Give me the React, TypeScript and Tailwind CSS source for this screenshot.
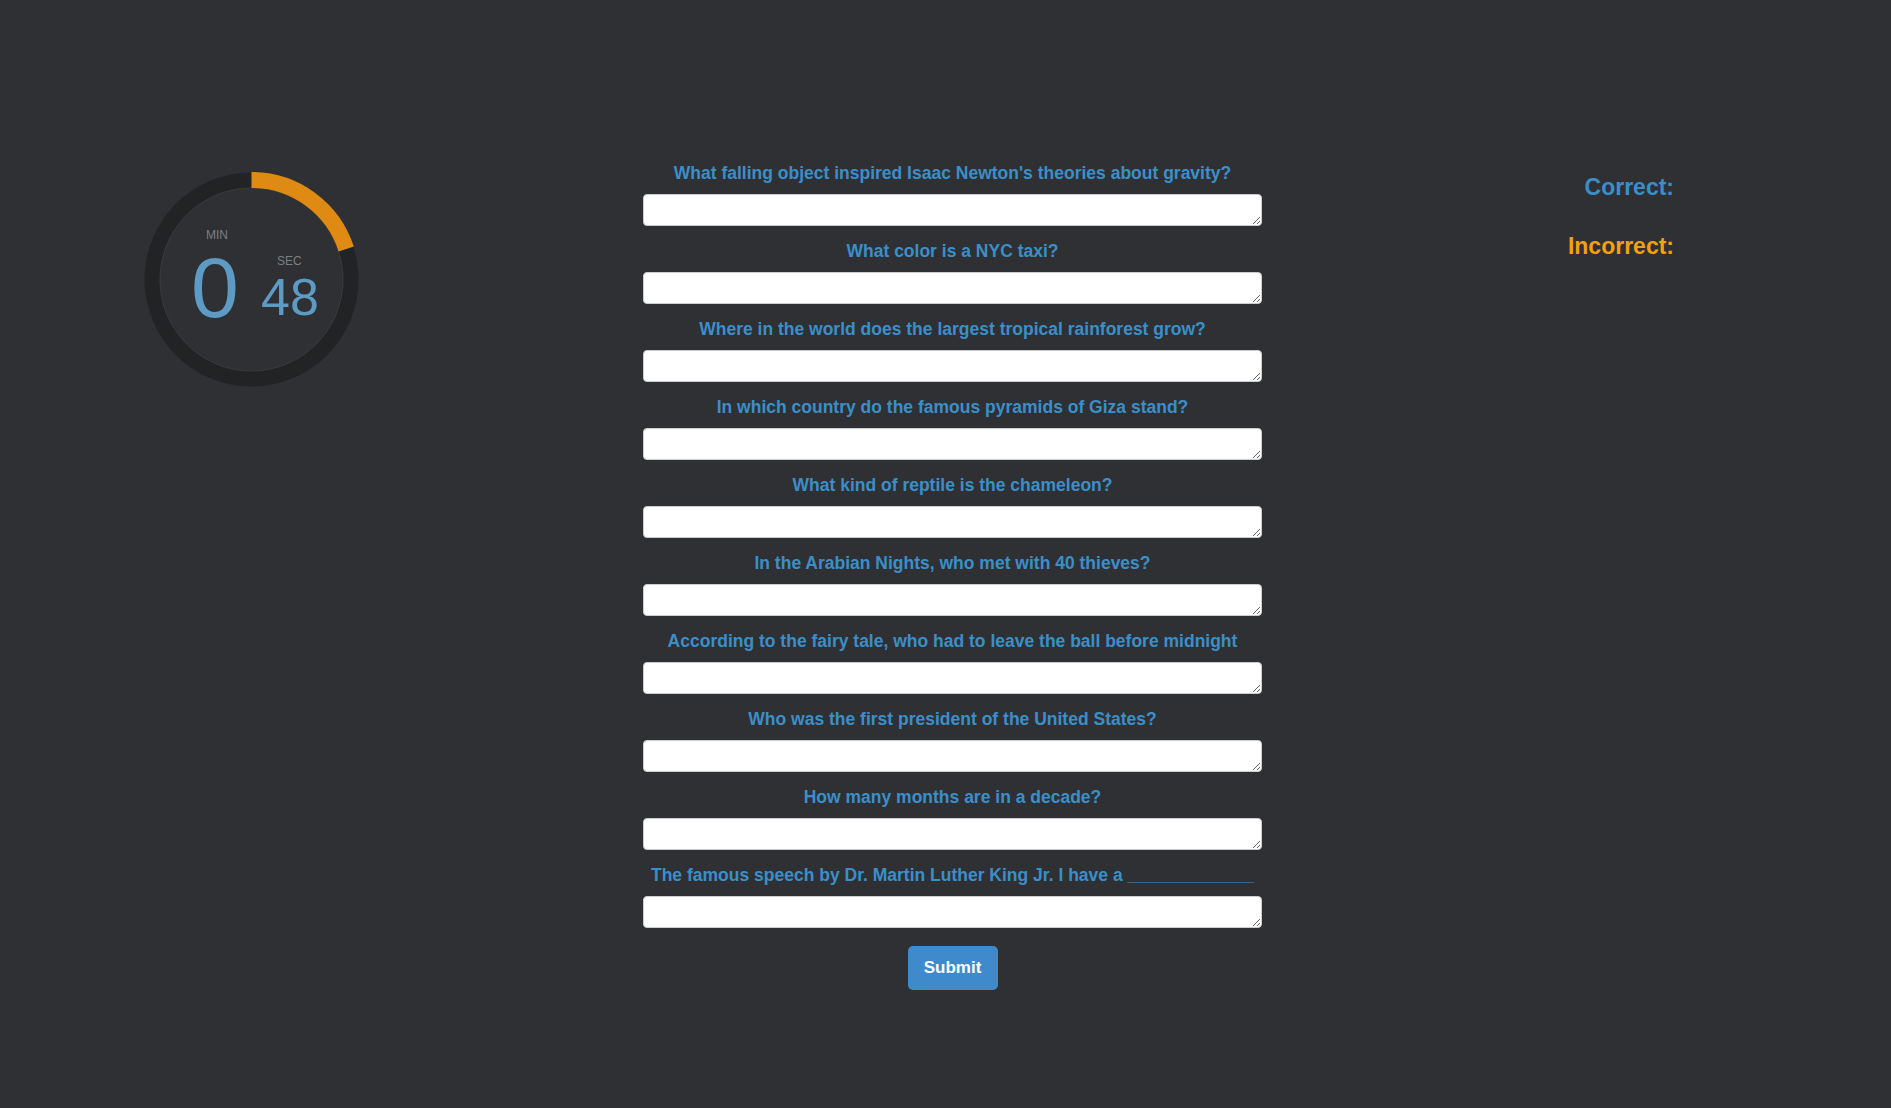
const questions = [
  "What falling object inspired Isaac Newton's theories about gravity?",
  "What color is a NYC taxi?",
  "Where in the world does the largest tropical rainforest grow?",
  "In which country do the famous pyramids of Giza stand?",
  "What kind of reptile is the chameleon?",
  "In the Arabian Nights, who met with 40 thieves?",
  "According to the fairy tale, who had to leave the ball before midnight",
  "Who was the first president of the United States?",
  "How many months are in a decade?",
  "The famous speech by Dr. Martin Luther King Jr. I have a _____________",
];

const Timer = () => {
  const r = 99.5;
  const c = 2 * Math.PI * r;
  const arc = (12 / 60) * c;
  return (
    <div className="relative ml-[144px] mt-[10px] size-[215px]">
      <svg width="215" height="215" viewBox="0 0 215 215">
        <circle cx="107.5" cy="107.5" r="107" fill="#222324" />
        <circle cx="107.5" cy="107.5" r="91.5" fill="#2f3033" stroke="#3a3b3d" strokeWidth="1" />
        <circle
          cx="107.5"
          cy="107.5"
          r={r}
          fill="none"
          stroke="#df8a12"
          strokeWidth="16"
          strokeDasharray={`${arc} ${c}`}
          transform="rotate(-90 107.5 107.5)"
        />
      </svg>
      <span className="absolute left-[62px] top-[57px] text-[12px] leading-none text-[#7d7e80]">MIN</span>
      <span className="absolute left-[47px] top-[72px] text-[86px] leading-none text-[#5e9bc4]">0</span>
      <span className="absolute left-[133px] top-[83px] text-[12px] leading-none text-[#7d7e80]">SEC</span>
      <span className="absolute left-[117px] top-[99px] text-[52px] leading-none text-[#5e9bc4]">48</span>
    </div>
  );
};

export default function App() {
  return (
    <div className="min-h-[1108px] w-full bg-[#2f3033] font-['Liberation_Sans',Arial,sans-serif]">
      <div className="flex pt-[163px]">
        <div className="-mt-[1px] w-[643px] shrink-0">
          <Timer />
        </div>
        <form className="flex w-[619px] shrink-0 flex-col" onSubmit={(e) => e.preventDefault()}>
          {questions.map((q, i) => (
            <div key={i} className="mb-[15.5px] flex flex-col">
              <label className="whitespace-nowrap text-center text-[17.5px] font-bold leading-[20px] text-[#3b8fc9]">
                {q}
              </label>
              <textarea className="mt-[10.5px] h-[32px] w-full resize-y rounded-[4px] border border-[#ccc] bg-white" />
            </div>
          ))}
          <div className="mt-[3px] flex justify-center">
            <button
              type="submit"
              className="h-[44px] w-[90px] rounded-[5px] bg-[#3f8acb] text-[17px] font-bold text-white"
            >
              Submit
            </button>
          </div>
        </form>
        <div className="-mt-[1px] flex-1 pr-[217px] pt-[12px] text-right">
          <div className="text-[23px] font-bold leading-[26px] text-[#3b8fc9]">Correct:</div>
          <div className="mt-[33px] text-[23px] font-bold leading-[26px] text-[#f3a012]">Incorrect:</div>
        </div>
      </div>
    </div>
  );
}
